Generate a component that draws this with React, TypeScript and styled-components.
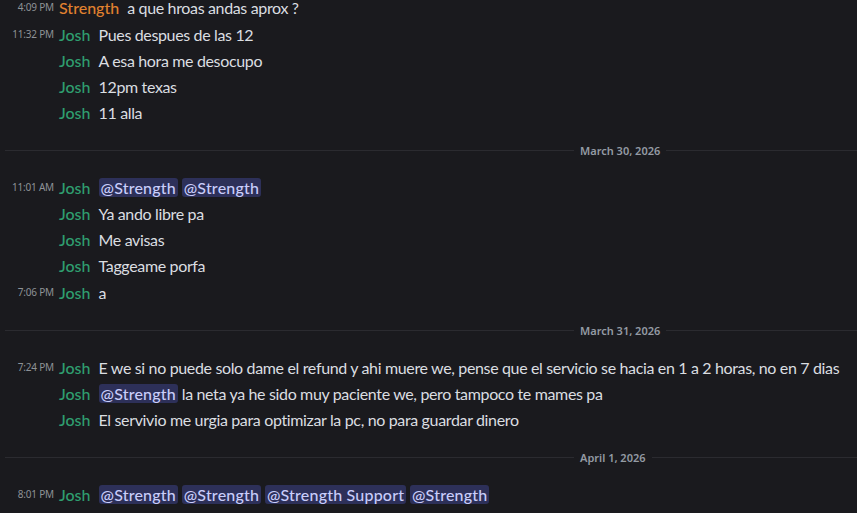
import { FC } from 'react';
import styled, { createGlobalStyle } from 'styled-components';

type Part = string | { mention: string };

type Message = {
  time?: string;
  author: 'Josh' | 'Strength';
  parts: Part[];
  groupStart?: boolean;
};

type Block = { divider: string } | { messages: Message[] };

const AUTHOR_COLORS = {
  Josh: '#2f9e6f',
  Strength: '#e0812f',
};

const feed: Block[] = [
  {
    messages: [
      { time: '4:09 PM', author: 'Strength', parts: ['a que hroas andas aprox ?'], groupStart: true },
      { time: '11:32 PM', author: 'Josh', parts: ['Pues despues de las 12'], groupStart: true },
      { author: 'Josh', parts: ['A esa hora me desocupo'] },
      { author: 'Josh', parts: ['12pm texas'] },
      { author: 'Josh', parts: ['11 alla'] },
    ],
  },
  { divider: 'March 30, 2026' },
  {
    messages: [
      { time: '11:01 AM', author: 'Josh', parts: [{ mention: '@Strength' }, ' ', { mention: '@Strength' }] },
      { author: 'Josh', parts: ['Ya ando libre pa'] },
      { author: 'Josh', parts: ['Me avisas'] },
      { author: 'Josh', parts: ['Taggeame porfa'] },
      { time: '7:06 PM', author: 'Josh', parts: ['a'], groupStart: true },
    ],
  },
  { divider: 'March 31, 2026' },
  {
    messages: [
      {
        time: '7:24 PM',
        author: 'Josh',
        parts: [
          'E we si no puede solo dame el refund y ahi muere we, pense que el servicio se hacia en 1 a 2 horas, no en 7 dias',
        ],
      },
      {
        author: 'Josh',
        parts: [{ mention: '@Strength' }, ' la neta ya he sido muy paciente we, pero tampoco te mames pa'],
      },
      { author: 'Josh', parts: ['El servivio me urgia para optimizar la pc, no para guardar dinero'] },
    ],
  },
  { divider: 'April 1, 2026' },
  {
    messages: [
      {
        time: '8:01 PM',
        author: 'Josh',
        parts: [
          { mention: '@Strength' },
          ' ',
          { mention: '@Strength' },
          ' ',
          { mention: '@Strength Support' },
          ' ',
          { mention: '@Strength' },
        ],
      },
    ],
  },
];

const MessageRow: FC<{ message: Message }> = ({ message }) => (
  <Row $groupStart={!!message.groupStart}>
    <Timestamp>{message.time}</Timestamp>
    <Author $color={AUTHOR_COLORS[message.author]}>{message.author}</Author>
    <Content>
      {message.parts.map((part, i) =>
        typeof part === 'string' ? <span key={i}>{part}</span> : <Mention key={i}>{part.mention}</Mention>,
      )}
    </Content>
  </Row>
);

export default function App() {
  return (
    <>
      <GlobalStyle />
      <Chat>
        {feed.map((block, i) =>
          'divider' in block ? (
            <Divider key={i}>
              <Line $lead />
              <DateLabel>{block.divider}</DateLabel>
              <Line />
            </Divider>
          ) : (
            <Group key={i}>
              {block.messages.map((m, j) => (
                <MessageRow key={j} message={m} />
              ))}
            </Group>
          ),
        )}
      </Chat>
    </>
  );
}

const GlobalStyle = createGlobalStyle`
  html, body {
    margin: 0;
    height: 100%;
    background: #1a1a1e;
    overflow: hidden;
  }

  body {
    font-family: Lato, 'Noto Sans', sans-serif;
    color: #dbdee1;
  }
`;

const Chat = styled.div`
  display: flex;
  flex-direction: column;
  width: 1240px;
  margin-top: -7px;
  padding-left: 5px;
`;

const Group = styled.div`
  display: flex;
  flex-direction: column;
`;

const Row = styled.div<{ $groupStart: boolean }>`
  display: flex;
  align-items: center;
  height: 26px;
  margin-top: ${(p) => (p.$groupStart ? '1px' : '0')};
  white-space: nowrap;
`;

const Timestamp = styled.span`
  flex: 0 0 54px;
  box-sizing: border-box;
  padding-right: 5px;
  text-align: right;
  font-family: 'Noto Sans', sans-serif;
  font-size: 10px;
  color: #8e9297;
  letter-spacing: -0.2px;
`;

const Author = styled.span<{ $color: string }>`
  color: ${(p) => p.$color};
  font-size: 16px;
  font-weight: 500;
  margin-right: 8px;
`;

const Content = styled.span`
  font-size: 16px;
  color: #dbdee1;
  white-space: pre;
  letter-spacing: -0.35px;
`;

const Mention = styled.span`
  background: #2d3059;
  color: #c9cdfb;
  border-radius: 3px;
  padding: 0 2px;
  font-weight: 500;
  letter-spacing: 0.2px;
`;

const Divider = styled.div`
  display: flex;
  align-items: center;
  margin: 24px 0 23px;
  height: 2px;
`;

const Line = styled.div<{ $lead?: boolean }>`
  flex: ${(p) => (p.$lead ? '0 0 569px' : '1')};
  height: 1px;
  background: #2b2b30;
`;

const DateLabel = styled.span`
  padding: 0 6px;
  font-family: 'Noto Sans', sans-serif;
  font-size: 11px;
  font-weight: 600;
  color: #949ba4;
  line-height: 13px;
`;
